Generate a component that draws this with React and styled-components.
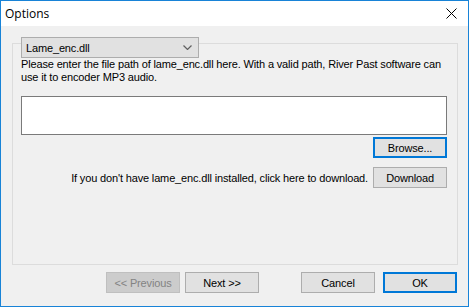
import React from 'react';
import styled, { createGlobalStyle } from 'styled-components';

const GlobalStyle = createGlobalStyle`
  body {
    margin: 0;
    font-family: "Liberation Sans", Arial, sans-serif;
    font-size: 11px;
    letter-spacing: -0.15px;
    color: #000;
  }
`;

const Window = styled.div`
  width: 469px;
  height: 307px;
  box-sizing: border-box;
  border: 1px solid #1883d7;
  background: #f0f0f0;
  display: flex;
  flex-direction: column;
`;

const TitleBar = styled.div`
  height: 25px;
  background: #fff;
  display: flex;
  align-items: center;
  justify-content: space-between;
  padding: 0 11px 0 4px;
  font-family: "Open Sans", "Noto Sans", sans-serif;
  font-size: 12px;
  letter-spacing: 0;
`;

const Body = styled.div`
  display: flex;
  flex-direction: column;
  padding: 17px 10px 0 11px;
`;

const GroupBox = styled.div`
  width: 446px;
  height: 222px;
  box-sizing: border-box;
  border: 1px solid #dcdcdc;
  padding: 0 10px 0 8px;
  display: flex;
  flex-direction: column;
`;

const Combo = styled.div`
  margin-top: -7px;
  width: 178px;
  height: 21px;
  box-sizing: border-box;
  background: #e1e1e1;
  border: 1px solid #adadad;
  display: flex;
  align-items: center;
  justify-content: space-between;
  padding: 0 6px 0 4px;
`;

const Description = styled.p`
  margin: 0;
  line-height: 13px;
  white-space: nowrap;
`;

const PathInput = styled.div`
  margin-top: 12px;
  height: 39px;
  box-sizing: border-box;
  background: #fff;
  border: 1px solid #7a7a7a;
`;

const Row = styled.div`
  display: flex;
  align-items: center;
  justify-content: flex-end;
  gap: ${(p) => p.$gap || 0}px;
  margin-top: ${(p) => p.$top || 0}px;
  white-space: nowrap;
`;

const Button = styled.div`
  width: 74px;
  height: 21px;
  box-sizing: border-box;
  display: flex;
  align-items: center;
  justify-content: center;
  background: ${(p) => (p.$disabled ? '#cccccc' : '#e1e1e1')};
  color: ${(p) => (p.$disabled ? '#838383' : '#000')};
  border: ${(p) => (p.$focused ? '2px solid #0078d7' : p.$disabled ? '1px solid #bfbfbf' : '1px solid #adadad')};
`;

const Footer = styled.div`
  display: flex;
  align-items: center;
  margin-top: 7px;
  padding-left: 94px;
`;

const Spacer = styled.div`
  width: ${(p) => p.$w}px;
`;

const Chevron = () => (
  <svg width="9" height="5" viewBox="0 0 9 5">
    <path d="M0.5 0.5 L4.5 4.5 L8.5 0.5" fill="none" stroke="#606060" strokeWidth="1.2" />
  </svg>
);

const CloseIcon = () => (
  <svg width="11" height="11" viewBox="0 0 11 11">
    <path d="M0.5 0.5 L10.5 10.5 M10.5 0.5 L0.5 10.5" stroke="#000" strokeWidth="1" />
  </svg>
);

export default function App() {
  return (
    <>
      <GlobalStyle />
      <Window>
        <TitleBar>
          <span>Options</span>
          <CloseIcon />
        </TitleBar>
        <Body>
          <GroupBox>
            <Combo>
              <span>Lame_enc.dll</span>
              <Chevron />
            </Combo>
            <Description>
              Please enter the file path of lame_enc.dll here. With a valid path, River Past software can
              <br />
              use it to encoder MP3 audio.
            </Description>
            <PathInput />
            <Row $top={2}>
              <Button $focused>Browse...</Button>
            </Row>
            <Row $top={9} $gap={5}>
              <span>If you don't have lame_enc.dll installed, click here to download.</span>
              <Button>Download</Button>
            </Row>
          </GroupBox>
          <Footer>
            <Button $disabled>&lt;&lt; Previous</Button>
            <Spacer $w={5} />
            <Button>Next &gt;&gt;</Button>
            <Spacer $w={42} />
            <Button>Cancel</Button>
            <Spacer $w={8} />
            <Button $focused>OK</Button>
          </Footer>
        </Body>
      </Window>
    </>
  );
}
